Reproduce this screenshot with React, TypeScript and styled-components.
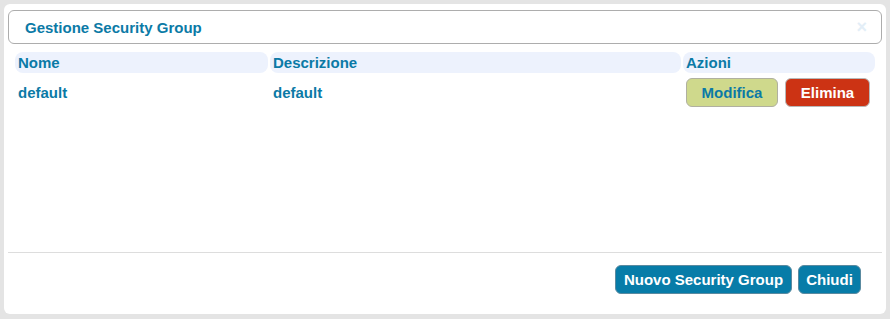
import React from "react";
import styled, { createGlobalStyle } from "styled-components";

const Global = createGlobalStyle`
  html, body { margin: 0; padding: 0; background: #e4e4e4; }
  body { font-family: "Liberation Sans", Arial, sans-serif; }
  * { box-sizing: border-box; }
`;

const Frame = styled.div`
  width: 890px;
  height: 319px;
  padding: 4px 4px 5px 4px;
  background: #e4e4e4;
`;

const Panel = styled.div`
  height: 100%;
  background: #fff;
  border-radius: 6px;
  padding: 6px 4px 0 4px;
  display: flex;
  flex-direction: column;
`;

const TitleBar = styled.div`
  height: 34px;
  border: 1px solid #adadad;
  border-radius: 6px;
  padding: 0 14px 0 16px;
  display: flex;
  align-items: center;
  justify-content: space-between;
`;

const Title = styled.span`
  color: #0b7aa6;
  font-size: 15px;
  font-weight: bold;
`;

const CloseX = styled.span`
  color: #e3eef7;
  font-size: 18px;
  font-weight: bold;
  line-height: 1;
`;

const Body = styled.div`
  flex: 1;
  padding: 8px 7px 0 7px;
  border-bottom: 1px solid #dddddd;
`;

const Grid = styled.div`
  display: grid;
  grid-template-columns: 253px 411px 192px;
  column-gap: 2px;
`;

const HeadCell = styled.div`
  height: 21px;
  background: #edf2fd;
  border-radius: 8px;
  padding-left: 3px;
  display: flex;
  align-items: center;
  color: #0b7aa6;
  font-size: 15px;
  font-weight: bold;
`;

const Cell = styled.div`
  height: 35px;
  padding: 4px 0 0 3px;
  display: flex;
  align-items: center;
  gap: 7px;
  color: #0b7aa6;
  font-size: 15px;
  font-weight: bold;
`;

type Variant = "edit" | "delete" | "primary";

const colors: Record<Variant, { bg: string; fg: string; border: string }> = {
  edit: { bg: "#cfd98c", fg: "#0b7aa6", border: "#b0b0a0" },
  delete: { bg: "#cc3314", fg: "#ffffff", border: "#b8b8b8" },
  primary: { bg: "#077ca8", fg: "#ffffff", border: "#5a8aa0" },
};

const Button = styled.button<{ $variant: Variant; $w: number }>`
  height: 29px;
  width: ${(p) => p.$w}px;
  padding: 0;
  border: 1px solid ${(p) => colors[p.$variant].border};
  border-radius: 6px;
  background: ${(p) => colors[p.$variant].bg};
  color: ${(p) => colors[p.$variant].fg};
  font-family: "Liberation Sans", Arial, sans-serif;
  font-size: 15px;
  font-weight: bold;
  cursor: pointer;
`;

const Footer = styled.div`
  display: flex;
  justify-content: flex-end;
  gap: 6px;
  padding: 12px 21px 20px 0;
`;

export default function App() {
  return (
    <>
      <Global />
      <Frame>
        <Panel>
          <TitleBar>
            <Title>Gestione Security Group</Title>
            <CloseX>×</CloseX>
          </TitleBar>
          <Body>
            <Grid>
              <HeadCell>Nome</HeadCell>
              <HeadCell>Descrizione</HeadCell>
              <HeadCell>Azioni</HeadCell>
              <Cell>default</Cell>
              <Cell>default</Cell>
              <Cell>
                <Button $variant="edit" $w={92}>Modifica</Button>
                <Button $variant="delete" $w={85}>Elimina</Button>
              </Cell>
            </Grid>
          </Body>
          <Footer>
            <Button $variant="primary" $w={177}>Nuovo Security Group</Button>
            <Button $variant="primary" $w={63}>Chiudi</Button>
          </Footer>
        </Panel>
      </Frame>
    </>
  );
}
